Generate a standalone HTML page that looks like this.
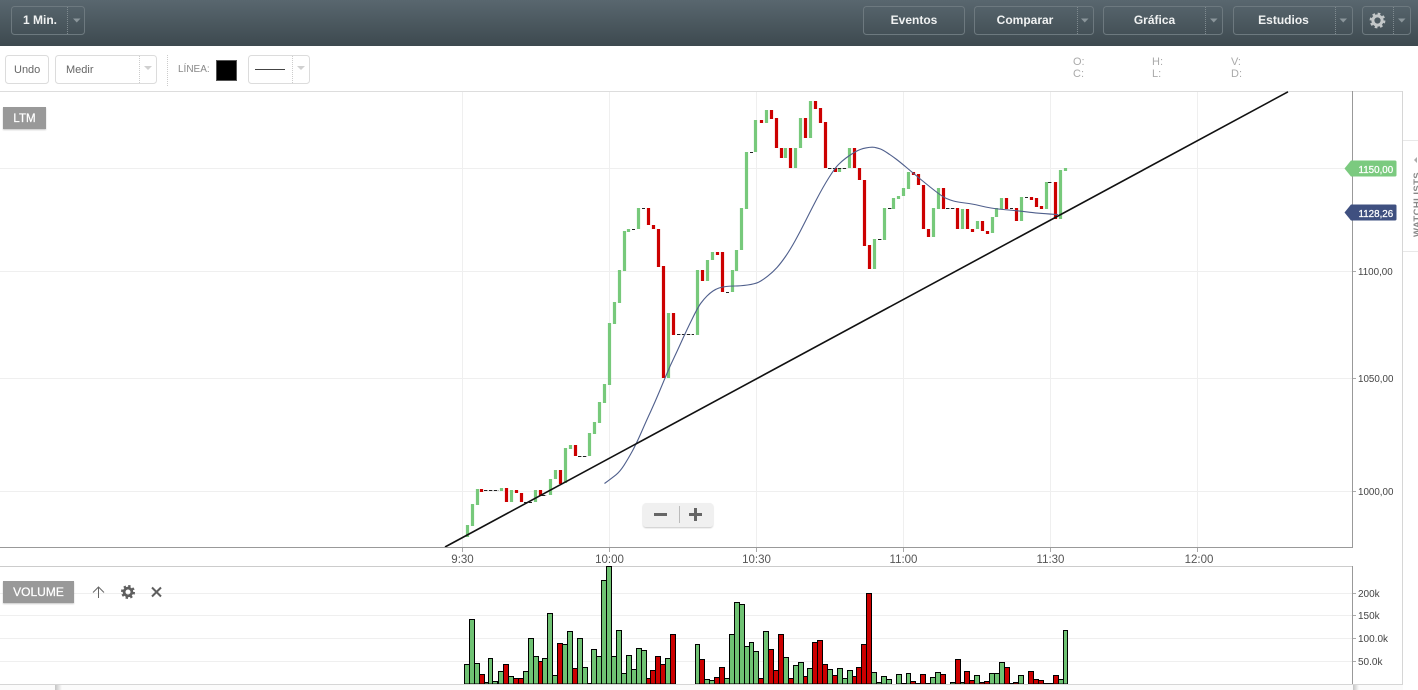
<!DOCTYPE html>
<html>
<head>
<meta charset="utf-8">
<title>Chart</title>
<style>
html,body{margin:0;padding:0;background:#fff;width:1418px;height:690px;overflow:hidden}
svg{display:block}
text{font-family:"Liberation Sans",Arial,sans-serif}
.b{font-size:12px;font-weight:bold;fill:#f0f2f2;text-anchor:middle}
.ax{font-size:9.8px;fill:#444}
.vx{font-size:10px;fill:#444}
.tx{font-size:11.5px;fill:#555;text-anchor:middle}
.ohlc{font-size:11px;fill:#aaa}
.hv{stroke:#fff;stroke-width:.25px}
</style>
</head>
<body>
<svg width="1418" height="690" viewBox="0 0 1418 690" xmlns="http://www.w3.org/2000/svg">
<defs>
<linearGradient id="tb" x1="0" y1="0" x2="0" y2="1"><stop offset="0" stop-color="#59676f"/><stop offset="1" stop-color="#3d494f"/></linearGradient>
<linearGradient id="sh" x1="0" y1="0" x2="1" y2="0"><stop offset="0" stop-color="#c4c4c4"/><stop offset="1" stop-color="#fbfbfb"/></linearGradient>
<filter id="ds" x="-10%" y="-10%" width="120%" height="130%"><feDropShadow dx="0" dy="1" stdDeviation="0.8" flood-color="#000" flood-opacity=".22"/></filter>
</defs>
<rect width="1418" height="690" fill="#fff"/>

<!-- top bar -->
<rect width="1418" height="46" fill="url(#tb)"/>
<g fill="none" stroke="#6d797f">
<rect x="11.5" y="6.5" width="73" height="28" rx="3"/>
<rect x="863.5" y="6.5" width="101" height="28" rx="3"/>
<rect x="974.5" y="6.5" width="119" height="28" rx="3"/>
<rect x="1103.5" y="6.5" width="119" height="28" rx="3"/>
<rect x="1233.5" y="6.5" width="119" height="28" rx="3"/>
<rect x="1362.5" y="6.5" width="48" height="28" rx="3"/>
<path stroke="#7f8a8f" stroke-dasharray="1 1" d="M67.5 7V34M1077.5 7V34M1205.5 7V34M1335.5 7V34M1393.5 7V34"/>
</g>
<g fill="#8b969b">
<path d="M73 18.5h7.5l-3.75 4z"/><path d="M1081 18.5h7.5l-3.75 4z"/><path d="M1210 18.5h7.5l-3.75 4z"/><path d="M1339.5 18.5h7.5l-3.75 4z"/><path d="M1398 18.5h7.5l-3.75 4z"/>
</g>
<text class="b" x="40" y="24">1 Min.</text>
<text class="b" x="914" y="24">Eventos</text>
<text class="b" x="1025" y="24">Comparar</text>
<text class="b" x="1154.5" y="24">Gráfica</text>
<text class="b" x="1283.5" y="24">Estudios</text>
<g transform="translate(1377.5 20.5)" fill="none" stroke="#c3c7c8">
<circle r="4.6" stroke-width="3"/>
<circle r="6.6" stroke-width="2.6" stroke-dasharray="2.59 2.59"/>
</g>

<!-- toolbar -->
<g fill="#fff" stroke="#dcdcdc">
<rect x="5.5" y="55.5" width="43" height="28" rx="3"/>
<rect x="55.5" y="55.5" width="101" height="28" rx="3"/>
<rect x="248.5" y="55.5" width="61" height="28" rx="3"/>
</g>
<path fill="none" stroke="#ccc" stroke-dasharray="1 1" d="M139.5 56V83M292.5 56V83M167.5 55V86"/>
<g fill="#d0d0d0"><path d="M144 66h8l-4 4z"/><path d="M297 66h8l-4 4z"/></g>
<text x="14" y="73" font-size="11" fill="#666">Undo</text>
<text x="66" y="73" font-size="11" fill="#666">Medir</text>
<text x="178" y="72" font-size="10" fill="#888">LÍNEA:</text>
<rect x="216.5" y="60.5" width="20" height="20" fill="#000" stroke="#555"/>
<path d="M255 69.5H285" stroke="#444"/>
<text class="ohlc" x="1073" y="65">O:</text><text class="ohlc" x="1073" y="77">C:</text>
<text class="ohlc" x="1152" y="65">H:</text><text class="ohlc" x="1152" y="77">L:</text>
<text class="ohlc" x="1231" y="65">V:</text><text class="ohlc" x="1231" y="77">D:</text>

<!-- panel frame -->
<path d="M0 91.5H1403" stroke="#ddd" fill="none"/>
<path d="M1402.5 91V685" stroke="#d6d6d6" fill="none"/>
<path d="M1403 140.5H1418M1403 251.5H1418" stroke="#e8e8e8" fill="none"/>

<!-- grid main -->
<path fill="none" stroke="#efefef" d="M0 168.5H1352M0 271.5H1352M0 378.5H1352M0 491.5H1352M462.5 92V547M609.5 92V547M756.5 92V547M903.5 92V547M1050.5 92V547M1197.5 92V547"/>
<!-- candles -->
<path fill="none" stroke="#77c97b" stroke-width="3.2" d="M467.5 525V537M472.5 504V526M477.5 489V505M501.5 488V491M511.5 490V502M535.5 490V502M550.5 479V495M555.5 470V479M565.5 448V483M570.5 445V449M589.5 433V456M594.5 422V434M599.5 402V423M604.5 384V403M609.5 323V385M614.5 302V324M619.5 270V303M624.5 231V271M628.5 229V232M638.5 208V229M668.5 313V378M697.5 270V335M707.5 260V281M712.5 252V260M732.5 270V292M736.5 250V271M741.5 208V250M746.5 152V209M755.5 120V152M766.5 110V123M785.5 148V158M795.5 148V168M800.5 118V148M810.5 101V138M839.5 168V172M849.5 148V168M874.5 239V269M884.5 208V240M893.5 198V209M898.5 196V199M903.5 188V196M908.5 172V189M933.5 208V237M938.5 188V209M962.5 209V229M977.5 221V229M992.5 217V233M996.5 208V217M1001.5 198V209M1021.5 197V221M1046.5 182V209M1060.5 170V219M1065.5 168V171"/>
<path fill="none" stroke="#cc0000" stroke-width="3.2" d="M481.5 489V492M506.5 488V502M516.5 490V493M521.5 493V502M540.5 490V496M560.5 470V484M575.5 445V456M648.5 208V225M653.5 225V229M658.5 229V267M663.5 266V378M673.5 313V335M702.5 270V281M717.5 252V255M722.5 252V292M761.5 120V123M771.5 110V119M776.5 118V148M781.5 148V158M790.5 148V168M805.5 118V138M815.5 101V109M820.5 108V123M825.5 122V168M835.5 168V172M854.5 148V168M859.5 168V180M864.5 180V246M869.5 245V269M913.5 172V175M918.5 174V185M923.5 185V229M928.5 229V237M943.5 188V209M957.5 208V229M967.5 209V229M972.5 229V232M982.5 221V231M987.5 231V234M1006.5 198V209M1016.5 208V221M1031.5 197V200M1036.5 198V207M1041.5 206V209M1055.5 182V219"/>
<path fill="none" stroke="#222" stroke-dasharray="3.4 1.5" d="M484 490.5H499M524 502.5H532M542 495.5H547M578 456.5H587M632 229.5H635M642 208.5H645M677 334.5H694M726 292.5H729M750 152.5H753M828 168.5H847M878 239.5H882M888 208.5H892M946 208.5H955M1010 208.5H1013M1025 197.5H1028M1048 182.5H1052"/>
<!-- moving average -->
<path fill="none" stroke="#4f5f8c" stroke-width="1.1" d="M604.5 483.5Q612 478 616 474.8Q620 471.5 624 465.3Q628 459 632.4 451Q636.7 443 641.7 431.5Q646.7 420 650.9 411Q655 402 659 392.5Q663 383 666.5 374.5Q670 366 673.9 358Q677.7 350 682.2 340Q686.7 330 692.4 318.5Q698 307 701 303Q704 299 707 296Q710 293 713 291Q716 289 719 288Q722 287 726 286.5Q730 286 735 286Q740 286 747.5 285Q755 284 758.5 282.3Q762 280.5 767.5 276.3Q773 272 777 267.5Q781 263 785.5 256.5Q790 250 795 241Q800 232 805 222Q810 212 816.5 199.5Q823 187 829 177.5Q835 168 838.5 164.5Q842 161 846 158Q850 155 855 152Q860 149 865.9 147.9Q871.7 146.7 874.9 147.4Q878 148 880.5 149Q883 150 887.5 153Q892 156 896 159Q900 162 906.5 167.5Q913 173 921.5 180Q930 187 936.5 192Q943 197 946.5 198.5Q950 200 953.5 201Q957 202 965 203Q973 204 979 205.5Q985 207 991 208Q997 209 1008.5 210Q1020 211 1030 212.3Q1040 213.5 1058 214.5"/>
<!-- trend line -->
<line x1="445" y1="547" x2="1288" y2="91.8" stroke="#111" stroke-width="1.6"/>

<!-- axes main -->
<path fill="none" stroke="#999" d="M0 547.5H1353M1352.5 91V548"/>
<path fill="none" stroke="#aaa" d="M462.5 548V552M609.5 548V552M756.5 548V552M903.5 548V552M1050.5 548V552M1197.5 548V552M1353 271.5H1356M1353 378.5H1356M1353 491.5H1356"/>
<text class="ax" x="1358" y="275">1100,00</text>
<text class="ax" x="1358" y="382">1050,00</text>
<text class="ax" x="1358" y="495">1000,00</text>
<text class="tx" x="462.5" y="563">9:30</text>
<text class="tx" x="609.5" y="563">10:00</text>
<text class="tx" x="756.5" y="563">10:30</text>
<text class="tx" x="903.5" y="563">11:00</text>
<text class="tx" x="1050.5" y="563">11:30</text>
<text class="tx" x="1199" y="563">12:00</text>

<!-- price flags -->
<path d="M1344.5 168.5L1351 160.5H1395a1.5 1.5 0 0 1 1.5 1.5V175a1.5 1.5 0 0 1-1.5 1.5H1351Z" fill="#7bca7f"/>
<text class="hv" x="1358.5" y="173" font-size="9.8" fill="#fff">1150,00</text>
<path d="M1344.5 212.5L1351 204.5H1395a1.5 1.5 0 0 1 1.5 1.5V219a1.5 1.5 0 0 1-1.5 1.5H1351Z" fill="#3f5080"/>
<text class="hv" x="1358.5" y="217" font-size="9.8" fill="#fff">1128,26</text>

<!-- watchlists -->
<path d="M1417 157l-3 3 3 3z" fill="#aaa"/>
<text transform="translate(1420 237) rotate(-90)" font-size="9.5" font-weight="bold" fill="#888" letter-spacing=".4">WATCHLISTS</text>

<!-- LTM -->
<rect x="3" y="107" width="43" height="22" fill="#999" filter="url(#ds)"/>
<text class="hv" x="24.5" y="122" font-size="11.5" fill="#fff" text-anchor="middle">LTM</text>

<!-- zoom control -->
<rect x="643" y="503" width="70" height="24" rx="3" fill="#f0f0f0" filter="url(#ds)"/>
<path d="M654 514.5H667M689 514.5H702M695.5 508V521" stroke="#666" stroke-width="3" fill="none"/>
<path d="M679.5 506V523" stroke="#bbb" fill="none"/>

<!-- volume panel -->
<path fill="none" stroke="#efefef" d="M0 593.5H1352M0 615.5H1352M0 638.5H1352M0 661.5H1352"/>
<path fill="none" stroke="#ccc" d="M0 566.5H1353"/>
<rect x="3" y="581" width="71" height="22" fill="#999" filter="url(#ds)"/>
<text class="hv" x="38.5" y="596" font-size="12" fill="#fff" text-anchor="middle">VOLUME</text>
<path d="M98.5 598V587M93 592.5L98.5 587L104 592.5" fill="none" stroke="#666"/>
<g transform="translate(128 592)" fill="none" stroke="#5f5f5f">
<circle r="3.9" stroke-width="2.8"/>
<circle r="5.8" stroke-width="2.4" stroke-dasharray="2.28 2.28"/>
</g>
<path d="M152 587.5L161 596.5M161 587.5L152 596.5" stroke="#5f5f5f" stroke-width="2" fill="none"/>

<!-- volume bars -->
<path fill="#6fc273" stroke="#000" d="M464.5 684V664.5h5V684zM469.5 684V619.5h5V684zM474.5 684V663.5h5V684zM484.5 684V682.5h4V684zM488.5 684V658.5h4V684zM492.5 684V681.5h5V684zM498.5 684V671.5h5V684zM508.5 684V676.5h5V684zM523.5 684V671.5h5V684zM528.5 684V638.5h5V684zM533.5 684V656.5h5V684zM542.5 684V658.5h5V684zM547.5 684V613.5h5V684zM552.5 684V675.5h5V684zM562.5 684V644.5h5V684zM567.5 684V631.5h5V684zM577.5 684V638.5h5V684zM582.5 684V667.5h5V684zM587.5 684V683.5h4V684zM591.5 684V649.5h5V684zM596.5 684V656.5h5V684zM601.5 684V580.5h5V684zM606.5 684V566.5h5V684zM611.5 684V656.5h5V684zM616.5 684V630.5h5V684zM621.5 684V673.5h5V684zM626.5 684V655.5h5V684zM631.5 684V669.5h5V684zM636.5 684V648.5h5V684zM641.5 684V650.5h5V684zM665.5 684V658.5h5V684zM695.5 684V644.5h4V684zM704.5 684V679.5h5V684zM709.5 684V680.5h5V684zM724.5 684V678.5h5V684zM729.5 684V634.5h5V684zM734.5 684V602.5h5V684zM739.5 684V604.5h5V684zM744.5 684V646.5h5V684zM749.5 684V642.5h4V684zM753.5 684V651.5h5V684zM763.5 684V631.5h5V684zM783.5 684V657.5h5V684zM793.5 684V665.5h5V684zM798.5 684V662.5h5V684zM807.5 684V668.5h5V684zM827.5 684V669.5h5V684zM837.5 684V668.5h5V684zM842.5 684V678.5h5V684zM847.5 684V670.5h5V684zM871.5 684V672.5h5V684zM876.5 684V682.5h5V684zM881.5 684V676.5h5V684zM886.5 684V679.5h5V684zM896.5 684V674.5h5V684zM901.5 684V683.5h5V684zM906.5 684V673.5h4V684zM925.5 684V683.5h5V684zM930.5 684V677.5h5V684zM935.5 684V672.5h5V684zM950.5 684V682.5h5V684zM960.5 684V682.5h4V684zM974.5 684V675.5h5V684zM989.5 684V673.5h5V684zM994.5 684V673.5h5V684zM999.5 684V662.5h5V684zM1009.5 684V683.5h4V684zM1018.5 684V675.5h5V684zM1058.5 684V679.5h5V684zM1063.5 684V630.5h4V684z"/>
<path fill="#cc0000" stroke="#000" d="M479.5 684V674.5h5V684zM503.5 684V664.5h5V684zM513.5 684V678.5h5V684zM518.5 684V678.5h5V684zM538.5 684V661.5h4V684zM557.5 684V643.5h5V684zM572.5 684V668.5h5V684zM646.5 684V678.5h4V684zM650.5 684V670.5h5V684zM655.5 684V656.5h5V684zM660.5 684V664.5h5V684zM670.5 684V634.5h5V684zM699.5 684V659.5h5V684zM714.5 684V677.5h5V684zM719.5 684V667.5h5V684zM758.5 684V678.5h5V684zM768.5 684V649.5h5V684zM773.5 684V670.5h5V684zM778.5 684V634.5h5V684zM788.5 684V678.5h5V684zM803.5 684V676.5h4V684zM812.5 684V642.5h5V684zM817.5 684V640.5h5V684zM822.5 684V664.5h5V684zM832.5 684V675.5h5V684zM852.5 684V676.5h4V684zM856.5 684V667.5h5V684zM861.5 684V644.5h5V684zM866.5 684V593.5h5V684zM910.5 684V681.5h5V684zM915.5 684V683.5h5V684zM920.5 684V674.5h5V684zM940.5 684V674.5h5V684zM955.5 684V659.5h5V684zM964.5 684V671.5h5V684zM969.5 684V680.5h5V684zM979.5 684V682.5h5V684zM984.5 684V681.5h5V684zM1004.5 684V667.5h5V684zM1013.5 684V682.5h5V684zM1028.5 684V671.5h5V684zM1033.5 684V679.5h5V684zM1038.5 684V680.5h5V684zM1043.5 684V683.5h5V684zM1048.5 684V683.5h5V684zM1053.5 684V675.5h5V684z"/>

<path fill="none" stroke="#999" d="M1352.5 566V685"/>
<path fill="none" stroke="#aaa" d="M1353 593.5H1356M1353 615.5H1356M1353 638.5H1356M1353 661.5H1356"/>
<text class="vx" x="1358" y="597">200k</text>
<text class="vx" x="1358" y="619">150k</text>
<text class="vx" x="1358" y="642">100.0k</text>
<text class="vx" x="1358" y="665">50.0k</text>

<!-- bottom strip -->
<rect x="0" y="685" width="1403" height="5" fill="#fbfbfb"/>
<path d="M0 684.5H1403" stroke="#d6d6d6" fill="none"/>
<rect x="55" y="685" width="7" height="5" fill="url(#sh)"/>
<rect x="1353" y="685" width="6" height="5" fill="url(#sh)"/>
</svg>
</body>
</html>
